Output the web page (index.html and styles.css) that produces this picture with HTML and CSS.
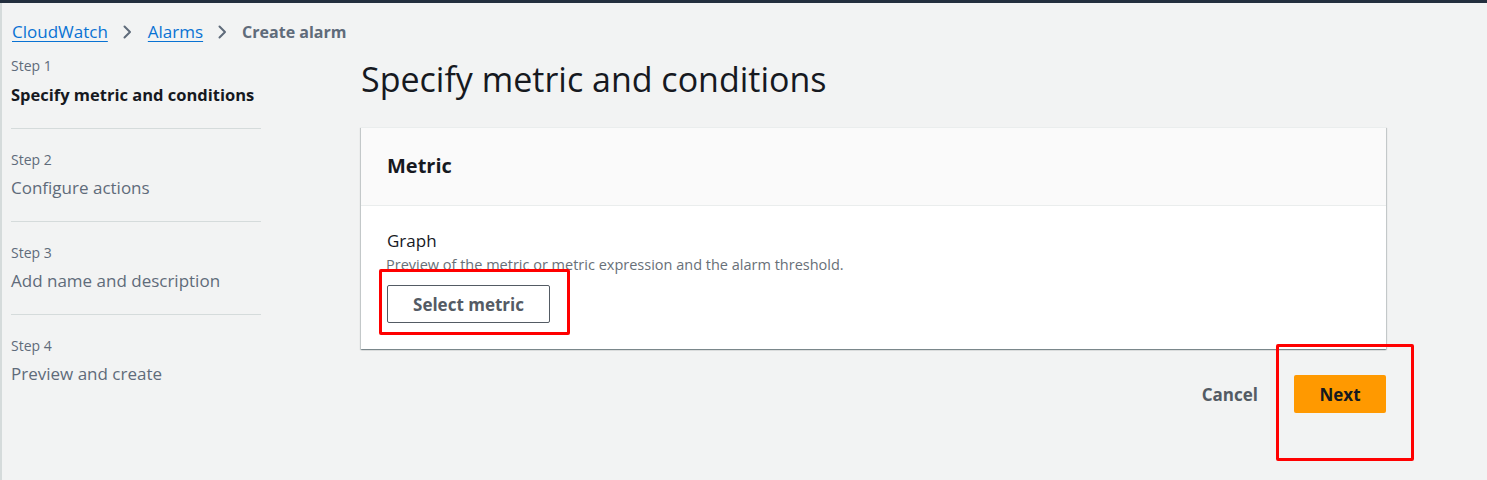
FILE: index.html
```html
<!DOCTYPE html>
<html lang="en">
<head>
<meta charset="utf-8">
<title>Create alarm</title>
<link rel="stylesheet" href="styles.css">
</head>
<body>
<div class="topbar"></div>
<div class="page">
  <nav class="breadcrumbs">
    <a class="crumb-link" href="#">CloudWatch</a>
    <svg class="chev" viewBox="0 0 10 16" width="10" height="16"><polyline points="2.5,2.5 8,8 2.5,13.5" fill="none" stroke="#5f6b7a" stroke-width="2" stroke-linecap="round" stroke-linejoin="round"/></svg>
    <a class="crumb-link" href="#">Alarms</a>
    <svg class="chev" viewBox="0 0 10 16" width="10" height="16"><polyline points="2.5,2.5 8,8 2.5,13.5" fill="none" stroke="#5f6b7a" stroke-width="2" stroke-linecap="round" stroke-linejoin="round"/></svg>
    <span class="crumb-current">Create alarm</span>
  </nav>
  <div class="layout">
    <ul class="steps">
      <li class="step first">
        <span class="step-label">Step 1</span>
        <span class="step-title active">Specify metric and conditions</span>
      </li>
      <li class="step">
        <span class="step-label">Step 2</span>
        <span class="step-title">Configure actions</span>
      </li>
      <li class="step">
        <span class="step-label">Step 3</span>
        <span class="step-title">Add name and description</span>
      </li>
      <li class="step last">
        <span class="step-label">Step 4</span>
        <span class="step-title">Preview and create</span>
      </li>
    </ul>
    <main class="main">
      <h1 class="page-title">Specify metric and conditions</h1>
      <section class="card">
        <header class="card-header"><h2>Metric</h2></header>
        <div class="card-body">
          <div class="field-label">Graph</div>
          <div class="field-desc">Preview of the metric or metric expression and the alarm threshold.</div>
          <div class="btn-wrap">
            <button class="btn-normal">Select metric</button>
            <span class="highlight hl-select"></span>
          </div>
        </div>
      </section>
      <div class="actions">
        <button class="btn-link">Cancel</button>
        <div class="btn-wrap">
          <button class="btn-primary">Next</button>
          <span class="highlight hl-next"></span>
        </div>
      </div>
    </main>
  </div>
</div>
</body>
</html>
```

FILE: styles.css
```css
* { box-sizing: border-box; }
html, body { margin: 0; padding: 0; }
body {
  background: #f2f3f3;
  font-family: "Open Sans", "Noto Sans", Arial, sans-serif;
  color: #16191f;
  height: 480px;
  overflow: hidden;
}
.topbar { height: 3px; background: #232f3e; }
.page {
  border-left: 2px solid #d5dbdb;
  height: 477px;
  padding-left: 9px;
}
.breadcrumbs {
  display: flex;
  align-items: center;
  padding-top: 17px;
  height: 41px;
  line-height: 24px;
  font-size: 17px;
}
.crumb-link {
  color: #0972d3;
  text-decoration: underline;
  text-underline-offset: 3px;
  padding-left: 1px;
}
.chev { margin: 0 15px 0 14px; }
.crumb-current { color: #5f6b7a; font-weight: 700; font-size: 16px; }
.layout { display: flex; }
.steps {
  list-style: none;
  margin: 0;
  padding: 0;
  width: 250px;
  flex: none;
}
.step {
  display: flex;
  flex-direction: column;
  gap: 6px;
  padding: 21px 0 21px;
  border-bottom: 1px solid #d5dbdb;
}
.step.first { padding-top: 12px; padding-bottom: 21px; gap: 7px; }
.step.last { border-bottom: none; }
.step-label { font-size: 14px; line-height: 20px; color: #5f6b7a; }
.step-title { font-size: 17px; line-height: 24px; color: #5f6b7a; white-space: nowrap; }
.step-title.active { color: #16191f; font-weight: 700; font-size: 16.5px; }
.main { margin-left: 100px; width: 1025px; flex: none; }
.page-title {
  margin: 15px 0 28px;
  font-size: 34px;
  line-height: 40px;
  font-weight: 400;
  color: #16191f;
}
.card {
  background: #fff;
  box-shadow: 0 1px 1px 0 rgba(0,28,36,.3), 1px 1px 1px 0 rgba(0,28,36,.15), -1px 1px 1px 0 rgba(0,28,36,.15);
  border-top: 1px solid #eaeded;
}
.card-header {
  background: #fafafa;
  border-bottom: 1px solid #eaeded;
  padding: 24px 26px 25px;
}
.card-header h2 { margin: 0; font-size: 20px; line-height: 28px; font-weight: 700; }
.card-body { padding: 23px 26px 26px; }
.field-label { font-size: 17px; line-height: 24px; color: #16191f; }
.field-desc { font-size: 14.5px; line-height: 20px; color: #687078; margin-top: 2px; margin-left: -1px; }
.btn-wrap { position: relative; display: inline-block; }
.card-body .btn-wrap { margin-top: 10px; }
.btn-normal {
  font-family: inherit;
  height: 38px;
  width: 163px;
  background: #fff;
  border: 1px solid #545b64;
  border-radius: 2px;
  color: #545b64;
  font-weight: 700;
  font-size: 17px;
  display: block;
}
.actions {
  display: flex;
  justify-content: flex-end;
  align-items: center;
  gap: 36px;
  margin-top: 26px;
}
.btn-link {
  font-family: inherit;
  background: none;
  border: none;
  padding: 0;
  color: #545b64;
  font-weight: 700;
  font-size: 17px;
}
.btn-primary {
  font-family: inherit;
  display: block;
  width: 92px;
  height: 38px;
  background: #ff9900;
  border: none;
  border-radius: 2px;
  color: #16191f;
  font-weight: 700;
  font-size: 17px;
}
.highlight {
  position: absolute;
  border: 3px solid #ff0000;
  border-radius: 2px;
  pointer-events: none;
}
.hl-select { left: -8px; top: -16px; width: 191px; height: 66px; }
.hl-next { left: -18px; top: -31px; width: 138px; height: 117px; }
```
